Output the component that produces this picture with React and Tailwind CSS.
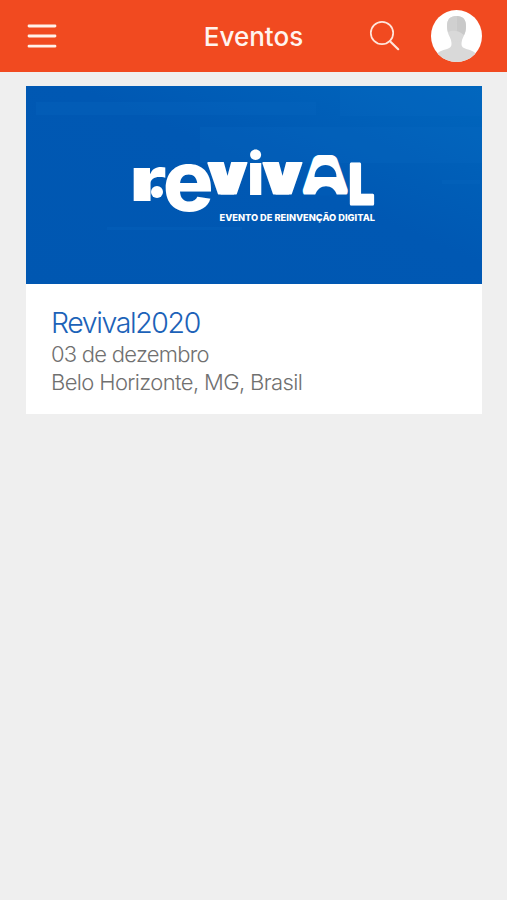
const MenuIcon = () => (
  <svg className="h-[26px] w-[30px]" viewBox="0 0 30 26" fill="none" stroke="#fff1ea" strokeWidth="2.8" strokeLinecap="round">
    <path d="M2 3h26M2 13h26M2 23.2h26" />
  </svg>
)

const SearchIcon = () => (
  <svg className="h-[32px] w-[32px]" viewBox="0 0 32 32" fill="none" stroke="#ffe6dc" strokeLinecap="round">
    <circle cx="13" cy="13" r="11.2" strokeWidth="1.7" />
    <path d="M21 21.2l8.2 8" strokeWidth="2.2" />
  </svg>
)

const Avatar = () => (
  <svg className="h-[52px] w-[51px]" viewBox="0 0 51 52">
    <defs>
      <clipPath id="avatar">
        <ellipse cx="25.5" cy="26" rx="25.5" ry="26" />
      </clipPath>
    </defs>
    <g clipPath="url(#avatar)">
      <rect width="51" height="52" fill="#ffffff" />
      <path d="M6 44C9 39.500 16 40 19 37.500C21 36 21 33 19 27L32 27C30 33 30 36 32 37.500C36 40 42 39.500 45 44L45 52H6Z" fill="#d9d9d9" />
      <path d="M25.500 6C32 6 35 9.500 35 16C35 24 31 32 25.500 32S16 24 16 16C16 9.500 19 6 25.500 6Z" fill="#d9d9d9" />
      <path d="M25.500 6C32 6 35 9.500 35 16C35 19.500 34.500 22.500 33 25C31 24 29 21.500 25.500 21Z" fill="#c9c9c9" />
      <path d="M25.500 6C19 6 16 9.500 16 16C16 18 16.300 20 17 22C20 20.500 23 20.500 25.500 21Z" fill="#d0d0d0" />
    </g>
  </svg>
)

// each letter of the wordmark has its own baseline, height and stretch
const letters = [
  { char: 'r', x: 129.5, y: 200.5, sx: 1.4, size: 61, weight: 900, stroke: 0 },
  { char: 'e', x: 162.8, y: 211, sx: 1, size: 85, weight: 800, stroke: 0 },
  { char: 'v', x: 209.5, y: 194.5, sx: 0.96, size: 59, weight: 900, stroke: 5, clip: 'url(#band)' },
  { char: 'i', x: 247.3, y: 194.5, sx: 0.98, size: 58, weight: 900, stroke: 0 },
  { char: 'v', x: 264.5, y: 194.5, sx: 0.96, size: 59, weight: 900, stroke: 5, clip: 'url(#band)' },
  { char: 'A', x: 309, y: 190.5, sx: 1.02, size: 40, weight: 900, stroke: 14, clip: 'url(#aBand)' },
  { char: 'L', x: 349, y: 203.5, sx: 0.8, size: 55.5, weight: 900, stroke: 3 },
]

const Banner = () => (
  <svg className="block h-[198px] w-full" viewBox="26 86 456 198">
    <defs>
      <linearGradient id="blue" x1="0" y1="1" x2="1" y2="0">
        <stop offset="0" stopColor="#0057b1" />
        <stop offset="0.55" stopColor="#0058b3" />
        <stop offset="1" stopColor="#0066bd" />
      </linearGradient>
      <clipPath id="band">
        <rect x="200" y="162" width="110" height="32.5" />
      </clipPath>
      <clipPath id="aBand">
        <rect x="300" y="150" width="52" height="44.5" />
      </clipPath>
    </defs>
    <rect x="26" y="86" width="456" height="198" fill="url(#blue)" />
    <g fill="#0a6bc4" opacity="0.22">
      <rect x="36" y="102" width="280" height="13" />
      <rect x="200" y="127" width="282" height="36" />
      <rect x="340" y="88" width="142" height="28" />
      <rect x="107" y="227" width="135" height="3" />
      <rect x="442" y="180" width="38" height="4" />
    </g>
    <g fill="white" stroke="white" strokeLinejoin="round" fontFamily="Inter, sans-serif">
      {letters.map((l, idx) => (
        <g key={idx} clipPath={l.clip}>
          <text transform={`translate(${l.x} ${l.y}) scale(${l.sx} 1)`} fontSize={l.size} fontWeight={l.weight} strokeWidth={l.stroke}>
            {l.char}
          </text>
        </g>
      ))}
    </g>
    <circle cx="157" cy="192" r="6" fill="white" />
    {/* arches cut into the A */}
    <path d="M314.500 177C314.500 161 336.500 161 336.500 177Z" fill="#005ab5" />
    <path d="M315 195.500C318 183 334 183 337 195.500Z" fill="#005ab5" />
    <text x="219.500" y="220.500" fill="white" fontFamily="Inter, sans-serif" fontWeight="800" fontSize="9" textLength="155.500" lengthAdjust="spacingAndGlyphs">
      EVENTO DE REINVENÇÃO DIGITAL
    </text>
  </svg>
)

const App = () => {
  return (
    <div className="min-h-screen bg-[#efefef] font-['Inter',sans-serif]">
      <header className="grid h-[72px] grid-cols-[1fr_auto_1fr] items-center bg-[#f14a20] pr-[25px] pl-[27px]">
        <button className="justify-self-start" aria-label="Menu">
          <MenuIcon />
        </button>
        <h1 className="-ml-[2px] text-[26px] font-medium text-[#fff4ef]">Eventos</h1>
        <div className="flex items-center gap-[30px] justify-self-end">
          <button aria-label="Buscar">
            <SearchIcon />
          </button>
          <Avatar />
        </div>
      </header>

      <main className="px-[26px] pt-[14px]">
        <article className="w-[456px] bg-white">
          <Banner />
          <div className="h-[130px] pt-[22px] pl-[25px] text-[22px] leading-[28px] font-light text-[#707070]">
            <h2 className="text-[28.500px] leading-[34px] tracking-[-1.400px] text-[#1c62b8]">Revival2020</h2>
            <p className="tracking-[-0.750px]">03 de dezembro</p>
            <p className="tracking-[-0.630px]">Belo Horizonte, MG, Brasil</p>
          </div>
        </article>
      </main>
    </div>
  )
}

export default App
